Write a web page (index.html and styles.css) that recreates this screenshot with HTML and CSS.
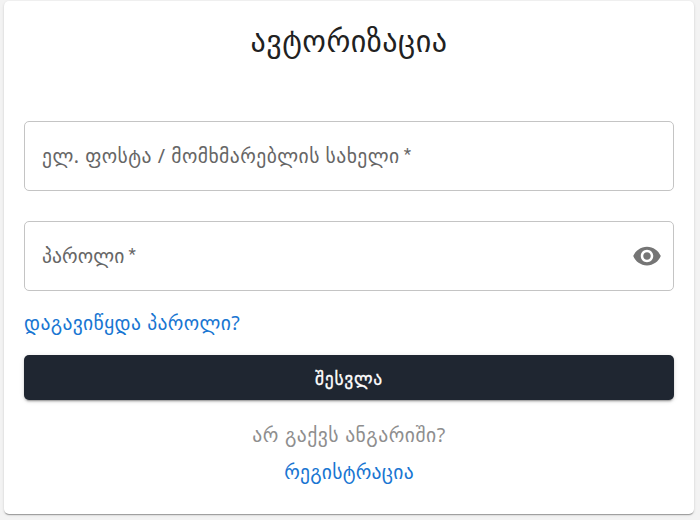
FILE: index.html
```html
<!DOCTYPE html>
<html lang="ka">
<head>
<meta charset="utf-8">
<title>ავტორიზაცია</title>
<link rel="stylesheet" href="styles.css">
</head>
<body>
<main class="card">
  <h1 class="title">ავტორიზაცია</h1>
  <form class="form">
    <label class="field"><span class="label label-user">ელ. ფოსტა / მომხმარებლის სახელი</span><span class="star">*</span></label>
    <label class="field"><span class="label label-pass">პაროლი</span><span class="star">*</span>
      <svg class="eye" viewBox="0 0 24 24"><path d="M12 4.5C7 4.5 2.73 7.61 1 12c1.73 4.39 6 7.5 11 7.5s9.27-3.11 11-7.5c-1.73-4.39-6-7.5-11-7.5M12 17c-2.76 0-5-2.24-5-5s2.24-5 5-5 5 2.24 5 5-2.24 5-5 5m0-8c-1.66 0-3 1.34-3 3s1.34 3 3 3 3-1.34 3-3-1.34-3-3-3"/></svg>
    </label>
    <a class="link forgot">დაგავიწყდა პაროლი?</a>
    <button class="submit" type="button">შესვლა</button>
    <p class="hint">არ გაქვს ანგარიში?</p>
    <a class="link register">რეგისტრაცია</a>
  </form>
</main>
</body>
</html>
```
FILE: styles.css
```css
* { box-sizing: border-box; }
body {
  margin: 0;
  height: 520px;
  padding-top: 1px;
  overflow: hidden;
  background: #f3f3f3;
  font-family: "Noto Sans", "DejaVu Sans", sans-serif;
}
.card {
  margin: 0 6px 0 4px;
  height: 513px;
  padding: 18px 20px 0;
  background: #fff;
  border-radius: 5px;
  box-shadow: 0 2px 1px -1px rgba(0,0,0,.2), 0 1px 1px rgba(0,0,0,.14), 0 1px 3px rgba(0,0,0,.12);
}
.title {
  margin: 0 0 58px;
  height: 44px;
  line-height: 44px;
  text-align: center;
  font-size: 30px;
  font-weight: 400;
  letter-spacing: .5px;
  color: #212121;
}
.form { display: flex; flex-direction: column; }
.field {
  display: flex;
  align-items: center;
  height: 70px;
  margin-bottom: 30px;
  padding: 0 11px 0 17px;
  border: 1px solid #c4c4c4;
  border-radius: 5px;
  color: #666;
  font-size: 19.6px;
  white-space: nowrap;
}
.label { margin-top: -1px; }
.label-user { letter-spacing: .45px; word-spacing: .2px; }
.label-pass { letter-spacing: .1px; }
.star { margin: -5px 0 0 4px; font-family: Roboto, sans-serif; font-size: 17px; }
.eye { width: 30px; height: 30px; margin-left: auto; fill: #757575; }
.link { color: #1976d2; font-size: 19.6px; line-height: 28px; white-space: nowrap; }
.forgot { align-self: flex-start; margin-top: -12px; letter-spacing: .35px; word-spacing: .5px; }
.submit {
  height: 45px;
  margin: 18px 0 21px;
  border: 0;
  border-radius: 5px;
  background: #1f2631;
  color: #fff;
  font-family: inherit;
  font-size: 17.5px;
  font-weight: 500;
  letter-spacing: .7px;
  -webkit-text-stroke: .3px #fff;
  box-shadow: 0 3px 1px -2px rgba(0,0,0,.2), 0 2px 2px rgba(0,0,0,.14), 0 1px 5px rgba(0,0,0,.12);
}
.hint { margin: 0; text-align: center; color: #8e8e8e; font-size: 19.6px; line-height: 28px; letter-spacing: .5px; word-spacing: .5px; }
.register { align-self: center; margin-top: 9px; letter-spacing: .25px; }
```
